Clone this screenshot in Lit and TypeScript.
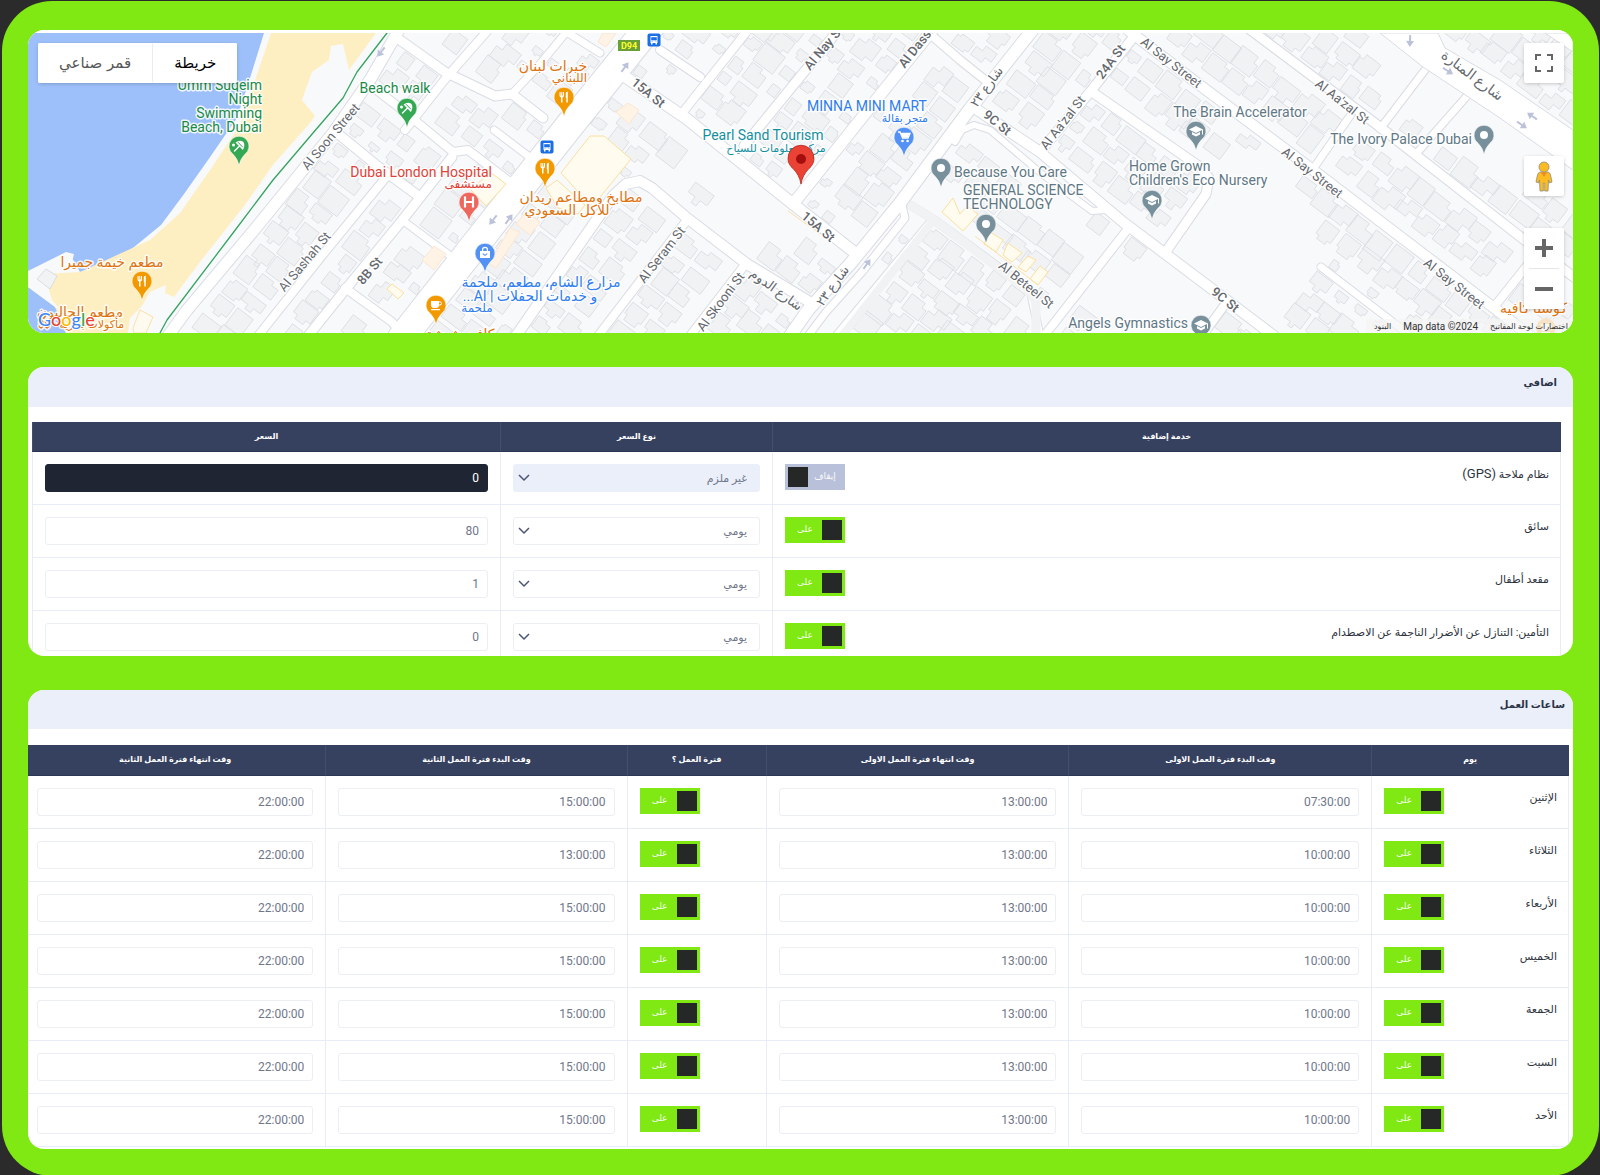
import { LitElement, html, svg, css } from "lit";
import { customElement, property } from "lit/decorators.js";
import { classMap } from "lit/directives/class-map.js";

type Pt = [number, number];
interface Road { w: number; pts: Pt[]; }
interface Label {
  t: string; x: number; y: number; c: string;
  a?: "start" | "middle" | "end"; r?: number; s?: string;
}
interface Pin { x: number; y: number; c: string; k: string; }

/* ---------- map data ---------- */

const ROADS: Road[] = [
  { w: 11, pts: [[400, 28], [370, 80], [333, 133], [255, 229], [187, 310], [168, 336]] },
  { w: 8, pts: [[387, 176], [320, 258], [258, 336]] },
  { w: 8, pts: [[488, 30], [446, 78], [405, 130]] },
  { w: 9, pts: [[452, 157], [400, 223], [345, 290], [308, 336]] },
  { w: 9, pts: [[400, 40], [445, 72], [495, 96], [512, 94], [543, 118]] },
  { w: 7, pts: [[512, 94], [540, 64], [568, 30]] },
  { w: 7, pts: [[560, 28], [600, 53]] },
  { w: 9, pts: [[337, 133], [380, 168], [420, 197]] },
  { w: 8, pts: [[374, 88], [400, 108], [453, 152], [468, 150], [523, 192]] },
  { w: 7, pts: [[494, 130], [540, 165]] },
  { w: 7, pts: [[402, 220], [452, 257]] },
  { w: 8, pts: [[345, 288], [392, 322], [402, 334]] },
  { w: 28, pts: [[650, 26], [570, 125], [475, 245], [402, 338]] },
  { w: 11, pts: [[624, 76], [687, 119], [793, 204], [854, 252]] },
  { w: 8, pts: [[660, 50], [700, 77]] },
  { w: 8, pts: [[683, 112], [748, 30]] },
  { w: 9, pts: [[840, 28], [760, 126], [744, 146]] },
  { w: 11, pts: [[934, 28], [868, 110], [793, 204]] },
  { w: 12, pts: [[1034, 28], [969, 110], [900, 203], [850, 264], [808, 310], [790, 336]] },
  { w: 7, pts: [[902, 205], [905, 218], [862, 272], [826, 312], [808, 336]] },
  { w: 8, pts: [[930, 34], [960, 60], [990, 84]] },
  { w: 10, pts: [[973, 107], [1040, 152], [1123, 222], [1200, 280], [1274, 336]] },
  { w: 6, pts: [[955, 142], [962, 130], [974, 125], [990, 130], [1042, 174], [1092, 211], [1106, 210]] },
  { w: 9, pts: [[1136, 34], [1090, 92], [1040, 152]] },
  { w: 10, pts: [[1128, 30], [1197, 83], [1313, 170], [1427, 257], [1502, 314], [1530, 336]] },
  { w: 9, pts: [[1248, 28], [1380, 127], [1527, 242], [1578, 280]] },
  { w: 9, pts: [[1092, 92], [1200, 167], [1209, 178], [1206, 194], [1165, 253]] },
  { w: 8, pts: [[1127, 230], [1044, 336]] },
  { w: 7, pts: [[1428, 66], [1380, 129]] },
  { w: 7, pts: [[1467, 96], [1416, 154]] },
  { w: 7, pts: [[1350, 116], [1313, 169]] },
  { w: 8, pts: [[1530, 262], [1494, 307]] },
  { w: 7, pts: [[1321, 267], [1398, 326], [1412, 338]] },
  { w: 8, pts: [[1226, 303], [1202, 336]] },
  { w: 10, pts: [[516, 336], [613, 196], [626, 184], [640, 181], [652, 188], [687, 218], [747, 264], [813, 304]] },
  { w: 8, pts: [[687, 220], [598, 336]] },
  { w: 8, pts: [[744, 266], [690, 336]] },
  { w: 7, pts: [[912, 206], [933, 219], [1030, 290], [1040, 336]] },
  { w: 7, pts: [[932, 220], [836, 336]] },
];

const GREY_LANES: Road[] = [
  { w: 9, pts: [[912, 206], [933, 219], [1028, 290], [1036, 302], [1036, 336]] },
  { w: 8, pts: [[932, 222], [842, 336]] },
];

/* ground without buildings: cx, cy, r */
const OPEN: [number, number, number][] = [
  [712, 160, 26], [745, 195, 34], [690, 140, 22], [780, 222, 26], [735, 225, 26], [586, 165, 36], [655, 175, 26], [640, 100, 14],
  [900, 100, 24], [1020, 165, 22], [1060, 205, 26], [1030, 200, 22], [1080, 228, 16],
  [1150, 300, 48], [1190, 250, 34], [1120, 320, 32], [1260, 180, 38], [1240, 230, 42], [1285, 225, 42], [1270, 270, 38],
  [1210, 270, 20], [960, 190, 16], [1350, 230, 10], [400, 70, 6], [1225, 130, 8], [850, 230, 10],
];

const segDist = (p: Pt, a: Pt, b: Pt): number => {
  const dx = b[0] - a[0], dy = b[1] - a[1];
  const t = Math.max(0, Math.min(1, ((p[0] - a[0]) * dx + (p[1] - a[1]) * dy) / (dx * dx + dy * dy)));
  return Math.hypot(p[0] - a[0] - t * dx, p[1] - a[1] - t * dy);
};

const clearance = (p: Pt): number => {
  let d = 99;
  for (const r of ROADS)
    for (let i = 1; i < r.pts.length; i++) d = Math.min(d, segDist(p, r.pts[i - 1], r.pts[i]) - r.w / 2);
  return d;
};

const rnd = (i: number, j: number, k: number): number => {
  const v = Math.sin(i * 127.1 + j * 311.7 + k * 74.7) * 43758.5453;
  return v - Math.floor(v);
};

/* Plots follow the street grid, which is turned 37 degrees */
const buildings = (): string => {
  const c = Math.cos(37 * Math.PI / 180), s = Math.sin(37 * Math.PI / 180);
  const out: string[] = [];
  for (let i = -50; i < 90; i++)
    for (let j = -70; j < 40; j++) {
      const u = i * 24 + rnd(i, j, 1) * 5, v = j * 22 + rnd(i, j, 2) * 5;
      const x = u * c - v * s, y = u * s + v * c;
      if (x < 150 || x > 1580 || y < 26 || y > 340) continue;
      if (x < 395 - (y - 33) * 0.74 + 14) continue;
      if (y < 60 + (x - 1400) * 0.66 + 44 && y > (x - 1440) * 0.66 + 34 && x > 1370) continue;
      if (OPEN.some(o => Math.hypot(x - o[0], y - o[1]) < o[2])) continue;
      const room = clearance([x, y]);
      if (room < 6) continue;
      const m = Math.min(12, room - 1);
      const hw = m * (0.74 + rnd(i, j, 3) * 0.32), hh = m * (0.62 + rnd(i, j, 4) * 0.35);
      const n = hw * (0.2 + rnd(i, j, 5) * 0.5), q = hh * (0.2 + rnd(i, j, 6) * 0.4);
      const kind = rnd(i, j, 7);
      const shape: Pt[] = kind < 0.2
        ? [[-hw, -hh], [hw, -hh], [hw, hh], [-hw, hh]]
        : kind < 0.5
          ? [[-hw, -hh], [n, -hh], [n, -q], [hw, -q], [hw, hh], [-hw, hh]]
          : kind < 0.75
            ? [[-hw, -hh], [hw, -hh], [hw, q], [n, q], [n, hh], [-n, hh], [-n, q], [-hw, q]]
            : [[-hw, -q], [-n, -q], [-n, -hh], [hw, -hh], [hw, q], [n, q], [n, hh], [-hw, hh]];
      out.push("M" + shape.map(([a, b]) => `${(x + a * c - b * s).toFixed(1)},${(y + a * s + b * c).toFixed(1)}`).join("L") + "Z");
    }
  return out.join("");
};

const BUILDINGS = buildings();
const line = (r: Road): string => "M" + r.pts.map(p => p.join(",")).join("L");

const GREEN = "#1a8a48", ORANGE = "#dd7410", BLUE = "#2f7df0", SLATE = "#5f7885", ROADC = "#64686e";

const LABELS: Label[] = [
  { t: "Umm Suqeim", x: 262, y: 90, c: GREEN, a: "end" },
  { t: "Night", x: 262, y: 104, c: GREEN, a: "end" },
  { t: "Swimming", x: 262, y: 118, c: GREEN, a: "end" },
  { t: "Beach, Dubai", x: 262, y: 132, c: GREEN, a: "end" },
  { t: "Beach walk", x: 395, y: 93, c: GREEN, a: "middle" },
  { t: "Al Soon Street", x: 331, y: 137, c: ROADC, r: -50, s: "road" },
  { t: "Al Sashah St", x: 305, y: 262, c: ROADC, r: -50, s: "road" },
  { t: "8B St", x: 370, y: 271, c: ROADC, r: -50, s: "roadb" },
  { t: "Dubai London Hospital", x: 492, y: 177, c: "#e04237", a: "end" },
  { t: "مستشفى", x: 492, y: 188, c: "#e04237", a: "end", s: "arsm" },
  { t: "خيرات لبنان", x: 553, y: 71, c: ORANGE, a: "middle", s: "ar" },
  { t: "اللبناني", x: 587, y: 82, c: ORANGE, a: "end", s: "arsm" },
  { t: "مطابخ ومطاعم ريدان", x: 581, y: 202, c: ORANGE, a: "middle", s: "ar" },
  { t: "للاكل السعودي", x: 567, y: 215, c: ORANGE, a: "middle", s: "ar" },
  { t: "مزارع الشام، مطعم، ملحمة", x: 541, y: 287, c: BLUE, a: "middle", s: "ar" },
  { t: "و خدمات الحفلات | Al...", x: 530, y: 301, c: BLUE, a: "middle", s: "ar rtl" },
  { t: "ملحمة", x: 477, y: 312, c: BLUE, a: "middle", s: "arsm" },
  { t: "كافيه شيشة", x: 460, y: 339, c: ORANGE, a: "middle", s: "ar" },
  { t: "15A St", x: 648, y: 93, c: ROADC, r: 39, s: "roadb" },
  { t: "Al Seram St", x: 662, y: 255, c: ROADC, r: -52, s: "road" },
  { t: "Al Skooni St", x: 721, y: 302, c: ROADC, r: -53, s: "road" },
  { t: "شارع الدوم", x: 776, y: 290, c: ROADC, r: 36, s: "roadar" },
  { t: "Pearl Sand Tourism", x: 763, y: 140, c: "#148f9e", a: "middle" },
  { t: "مركز معلومات للسياح", x: 776, y: 152, c: "#148f9e", a: "middle", s: "fine" },
  { t: "Al Nay St", x: 824, y: 48, c: ROADC, r: -50, s: "roadb" },
  { t: "Al Dassis St", x: 923, y: 39, c: ROADC, r: -52, s: "roadb" },
  { t: "MINNA MINI MART", x: 867, y: 111, c: BLUE, a: "middle" },
  { t: "متجر بقالة", x: 928, y: 122, c: BLUE, a: "end", s: "fine" },
  { t: "شارع ٢٣", x: 987, y: 87, c: ROADC, r: -54, s: "roadar" },
  { t: "شارع ٢٣", x: 833, y: 286, c: ROADC, r: -54, s: "roadar" },
  { t: "9C St", x: 997, y: 123, c: ROADC, r: 39, s: "roadb" },
  { t: "24A St", x: 1111, y: 62, c: ROADC, r: -53, s: "roadb" },
  { t: "Al Aa'zal St", x: 1063, y: 123, c: ROADC, r: -52, s: "road" },
  { t: "Al Say Street", x: 1171, y: 63, c: ROADC, r: 38, s: "road" },
  { t: "15A St", x: 818, y: 227, c: ROADC, r: 40, s: "roadb" },
  { t: "Because You Care", x: 954, y: 177, c: SLATE },
  { t: "GENERAL SCIENCE", x: 963, y: 195, c: SLATE },
  { t: "TECHNOLOGY", x: 963, y: 209, c: SLATE },
  { t: "Al Beteel St", x: 1026, y: 285, c: ROADC, r: 39, s: "road" },
  { t: "The Brain Accelerator", x: 1240, y: 117, c: SLATE, a: "middle" },
  { t: "Home Grown", x: 1129, y: 171, c: SLATE },
  { t: "Children's Eco Nursery", x: 1129, y: 185, c: SLATE },
  { t: "Angels Gymnastics", x: 1188, y: 328, c: SLATE, a: "end" },
  { t: "Al Aa'zal St", x: 1342, y: 102, c: ROADC, r: 38, s: "road" },
  { t: "Al Say Street", x: 1312, y: 173, c: ROADC, r: 38, s: "road" },
  { t: "Al Say Street", x: 1454, y: 284, c: ROADC, r: 38, s: "road" },
  { t: "9C St", x: 1225, y: 300, c: ROADC, r: 39, s: "roadb" },
  { t: "شارع المنارة", x: 1472, y: 76, c: ROADC, r: 37, s: "roadar big" },
  { t: "The Ivory Palace Dubai", x: 1472, y: 144, c: SLATE, a: "end" },
  { t: "كوستا كافيه", x: 1567, y: 313, c: ORANGE, a: "end", s: "ar" },
  { t: "مطعم خيمة جميرا", x: 112, y: 267, c: ORANGE, a: "middle", s: "ar" },
  { t: "مطعم الجاليون", x: 123, y: 317, c: ORANGE, a: "end", s: "ar" },
  { t: "مأكولات بحرية • $$", x: 81, y: 328, c: ORANGE, a: "middle", s: "fine rtl" },
];

const PINS: Pin[] = [
  { x: 239, y: 165, c: "#34a853", k: "beach" },
  { x: 407, y: 127, c: "#34a853", k: "beach" },
  { x: 142, y: 300, c: "#f29900", k: "food" },
  { x: 469, y: 221, c: "#ee675c", k: "h" },
  { x: 564, y: 116, c: "#f29900", k: "food" },
  { x: 545, y: 187, c: "#f29900", k: "food" },
  { x: 485, y: 272, c: "#5491f5", k: "bag" },
  { x: 436, y: 324, c: "#f29900", k: "cup" },
  { x: 904, y: 156, c: "#5491f5", k: "cart" },
  { x: 941, y: 187, c: "#78909c", k: "dot" },
  { x: 986, y: 243, c: "#78909c", k: "dot" },
  { x: 1196, y: 150, c: "#78909c", k: "cap" },
  { x: 1152, y: 219, c: "#78909c", k: "cap" },
  { x: 1484, y: 154, c: "#78909c", k: "dot" },
  { x: 1201, y: 344, c: "#78909c", k: "cap" },
  { x: 1546, y: 347, c: "#f7b95a", k: "cup" },
];

/* glyphs are centred on the head of the pin */
const GLYPH: Record<string, unknown> = {
  dot: svg`<circle r="4" fill="#fff"/>`,
  beach: svg`<path d="M-4.500,5L1,-.5" fill="none" stroke="#fff" stroke-width="1.500" stroke-linecap="round"/><path d="M-3.500,-3.500Q1,-6.500 4.500,-4Q6.500,-.5 3.800,4Z" fill="#fff"/><path d="M-1,-3.800L3.800,1.200" stroke="#34a853"/><circle cx="-5.500" cy="-1" r="1.500" fill="#fff"/>`,
  food: svg`<path d="M-4.500,-5v3.600q0,1.600 1.500,1.900V5.500h1.500V.5q1.500,-.3 1.500,-1.900V-5h-1v3.400h-.7V-5h-1v3.400h-.7V-5ZM1.800,-4Q2,-5.300 3.800,-5.300V5.500H2.300V1H1.800Z" fill="#fff"/>`,
  h: svg`<path d="M-4,-5.500V5.500M4,-5.500V5.500M-4,0H4" stroke="#fff" stroke-width="2.200" fill="none"/>`,
  bag: svg`<path d="M-5,-2H5V5H-5Z" fill="#fff"/><path d="M-2.400,-2V-3.400Q-2.400,-5.600 0,-5.600T2.400,-3.400V-2" stroke="#fff" stroke-width="1.200" fill="none"/><path d="M-2.200,.5Q0,3.600 2.200,.5" stroke="#5491f5" stroke-width="1.200" fill="none"/>`,
  cup: svg`<path d="M-5,-4H3V0Q3,3 0,3H-2Q-5,3 -5,0ZM-5,4H4V5.300H-5Z" fill="#fff"/><path d="M3,-3H4.300Q5.500,-3 5.500,-1.500T4,0H3" stroke="#fff" fill="none"/>`,
  cart: svg`<path d="M-6,-5h2l2.600,6H4l2,-4.500H-2.600" stroke="#fff" stroke-width="1.300" fill="none"/><path d="M-3,-3.500H5.500L3.700,.5H-1.400Z" fill="#fff"/><circle cx="-1.500" cy="4" r="1.300" fill="#fff"/><circle cx="3.600" cy="4" r="1.300" fill="#fff"/>`,
  cap: svg`<path d="M0,-5L7,-1.500L0,2L-7,-1.500Z" fill="#fff"/><path d="M-4,1L0,3L4,1V3.400L0,5.500L-4,3.400ZM6,-1.500H7V3.500H6Z" fill="#fff"/>`,
};

const ARROWS: [number, number, number][] = [
  [625, 67, -54], [509, 219, -54], [493, 220, 128], [381, 52, 128], [867, 264, -54],
  [1410, 41, 92], [1448, 71, 32], [1522, 125, 34], [1532, 116, 214],
];

@customElement("area-map")
class AreaMap extends LitElement {
  static styles = css`
    :host { display: block; position: relative; height: 303px; overflow: hidden; border-radius: 16px; background: #fff; }
    .canvas { display: block; width: 100%; height: 100%; }
    .lbl { font: 14px Roboto, "DejaVu Sans", sans-serif; paint-order: stroke; stroke: #fff; stroke-width: 3px; stroke-linejoin: round; stroke-opacity: .85; }
    .arsm { font-size: 12px; }
    .fine { font-size: 11px; }
    .road, .roadb, .roadar { font-size: 13px; }
    .roadb { font-weight: 500; }
    .big { font-size: 14px; }
    .rtl { direction: rtl; }
    .brand { font: 500 18px Lato, Roboto, sans-serif; paint-order: stroke; stroke: #fff; stroke-width: 2px; }
    .badge { font: 700 9px Roboto, sans-serif; }
    button { font: inherit; color: inherit; border: 0; background: #fff; padding: 0; cursor: pointer; display: grid; place-items: center; }
    .types { position: absolute; top: 13px; left: 10px; display: flex; height: 40px; background: #fff; border-radius: 2px; box-shadow: 0 1px 4px -1px rgba(0,0,0,.3); font: 15px "DejaVu Sans", sans-serif; color: #565656; }
    .types button { padding: 0 21px; border-radius: 2px; }
    .types .on { color: #000; border-left: 1px solid #ececec; }
    .tools { position: absolute; top: 13px; right: 9px; display: flex; flex-direction: column; }
    .tool { width: 40px; height: 40px; border-radius: 2px; box-shadow: 0 1px 4px -1px rgba(0,0,0,.3); }
    .man { margin: 73px 0 32px; }
    .zoom { display: flex; flex-direction: column; background: #fff; border-radius: 2px; box-shadow: 0 1px 4px -1px rgba(0,0,0,.3); }
    .zoom button { width: 40px; height: 40px; }
    .rule { height: 1px; margin: 0 5px; background: #e6e6e6; }
    .legal { position: absolute; right: 0; bottom: 0; display: flex; gap: 12px; padding: 0 5px 0 8px; height: 14px; align-items: center; background: rgba(245,245,245,.7); color: #333; font: 10px Roboto, "DejaVu Sans", sans-serif; white-space: nowrap; }
    .legal a { color: inherit; text-decoration: none; }
    .legal button { background: none; }
    .legal .sm { font-size: 8px; }
  `;

  render() {
    return html`
      <svg class="canvas" viewBox="28 30 1545 303" preserveAspectRatio="xMidYMid slice" role="img" aria-label="خريطة">
        <rect x="28" y="33" width="1545" height="300" fill="#f8f9fb"/>
        <path d="M28,33H264L250,78L237,118L208,160L184,194L161,225L128,252L112,262L80,272L72,258L28,271Z" fill="#9dc0fa"/>
        <path d="M28,287L62,312L66,333H28Z" fill="#9dc0fa"/>
        <path d="M271,33H376L349,70L343,44L331,46L329,60L312,72L302,100L315,116L310,123L273,165L245,205L200,262L174,297L165,293L166,285L150,292L142,306L130,318L128,333H66L52,300L44,274L80,272L150,240L180,213L210,170L240,125Z" fill="#feefc3"/>
        <path d="M28,271L66,252L74,254L72,262L56,272L40,280L52,300L62,312L28,287Z" fill="#f8f9fb"/>
        <path d="M37,279L46,269L57,276L50,289Z" fill="#f1f3f4" stroke="#dadde2"/>
        <path d="M133,328L140,310L153,317L146,333H134Z" fill="#fefaf0" stroke="#fbe2a5"/>
        <path d="${BUILDINGS}" fill="#f1f2f4" stroke="#dddfe4" stroke-width="1"/>
        <g fill="none" stroke-linejoin="round" stroke-linecap="round">
          ${ROADS.map(r => svg`<path d="${line(r)}" stroke="#d9dce3" stroke-width="${r.w + 2}"/>`)}
          ${ROADS.map(r => svg`<path d="${line(r)}" stroke="#fff" stroke-width="${r.w}"/>`)}
          ${GREY_LANES.map(r => svg`<path d="${line(r)}" stroke="#f1f2f4" stroke-width="${r.w}"/>`)}
          <path d="M387,33L357,72L343,98L313,133L273,180L233,233L167,320L160,333" stroke="#34a35f" stroke-width="1.300"/>
        </g>
        <path d="M1380,33L1404,52L1423,67L1500,118L1573,170V130L1500,80L1445,48L1438,33Z" fill="#fff" stroke="#d9dce3"/>
        <path d="M1545,33L1573,52V33Z" fill="#fff" stroke="#d9dce3"/>
        <g fill="#fffbee" stroke="#fbe0a0">
          <path d="M561,173L590,136H604L631,159L592,207Z"/>
          <path d="M471,190L490,172L506,184L486,206Z"/>
          <path d="M546,188L557,180L585,205L578,214L558,208Z"/>
          <path d="M387,289L392,284L404,293L398,299Z"/>
          <path d="M953,198L942,212L963,231L978,214L967,206L960,214Z"/>
          <path d="M990,232L1003,240L996,252L984,244ZM1008,243L1022,253L1012,262L1003,255ZM1028,256L1036,260L1026,272L1018,267ZM1040,266L1048,272L1038,285L1030,279Z"/>
          <path d="M975,236L1038,285M788,211L820,234" fill="none"/>
        </g>
        <g fill="#fff3e6" stroke="#fbe6d2">
          <path d="M616,112L628,103L639,110L629,124Z"/><path d="M603,33H616L606,47L598,42Z"/>
          <path d="M489,264L510,228L520,232L496,268Z"/><path d="M422,260L434,246L446,254L434,270Z"/><path d="M516,224L526,212L540,222L530,235Z"/>
        </g>
        ${ARROWS.map(([x, y, r]) => svg`<path transform="translate(${x} ${y}) rotate(${r})" d="M-6,-1H0V-4L6,0L0,4V1H-6Z" fill="#bcc2dc"/>`)}
        ${PINS.map(p => svg`<g transform="translate(${p.x} ${p.y - 19})"><path d="M0,19.500Q-1.200,13 -6,8.200A10,10 0 1 1 6,8.200Q1.200,13 0,19.500Z" fill="${p.c}" stroke="#fff" stroke-width=".6"/>${GLYPH[p.k]}</g>`)}
        ${LABELS.map(l => svg`<text class="lbl ${l.s ?? ""}" fill="${l.c}" transform="translate(${l.x} ${l.y})${l.r ? ` rotate(${l.r})` : ""}" y="${l.r ? 4 : 0}" text-anchor="${l.r ? "middle" : l.a ?? "start"}">${l.t}</text>`)}
        ${[[547, 147], [654, 40]].map(([x, y]) => svg`<g transform="translate(${x} ${y})"><rect x="-6.500" y="-6.500" width="13" height="13" rx="2" fill="#1a6fe6"/><path d="M-3.500,-4H3.500V3H-3.500ZM-3,3H-1.500V4.500H-3ZM1.500,3H3V4.500H1.500Z" fill="#fff"/><path d="M-2.500,-2.500H2.500V0H-2.500ZM-2.500,1.200H-1.300M1.300,1.200H2.500" fill="#1a6fe6" stroke="#1a6fe6" stroke-width=".6"/></g>`)}
        <rect x="618" y="40" width="22" height="11" fill="#689f38"/>
        <text class="badge" x="629" y="49" text-anchor="middle" fill="#ffff2e">D94</text>
        <path d="M801,184Q799.500,175 793,168.500A13,13 0 1 1 809,168.500Q802.500,175 801,184Z" fill="#ea4335" stroke="#b8261b" stroke-width=".8"/>
        <circle cx="801" cy="159" r="5" fill="#a50e0e"/>
        <text class="brand" x="38" y="326"><tspan fill="#4285f4">G</tspan><tspan fill="#ea4335">o</tspan><tspan fill="#fbbc04">o</tspan><tspan fill="#4285f4">g</tspan><tspan fill="#34a853">l</tspan><tspan fill="#ea4335">e</tspan></text>
        <rect x="28" y="30" width="1545" height="3" fill="#fff"/>
      </svg>
      <div class="types" dir="rtl">
        <button class="on" type="button">خريطة</button>
        <button type="button">قمر صناعي</button>
      </div>
      <div class="tools">
        <button class="tool" type="button" aria-label="ملء الشاشة">
          <svg width="18" height="18" viewBox="0 0 18 18" fill="none" stroke="#666" stroke-width="2"><path d="M1,6V1H6M12,1H17V6M17,12V17H12M6,17H1V12"/></svg>
        </button>
        <button class="tool man" type="button" aria-label="التجوّل الافتراضي">
          <svg width="18" height="31" viewBox="0 0 18 31"><g fill="#fbbc23" stroke="#8f8a78" stroke-width=".8"><path d="M5,11H13Q15,11.500 15.500,14L17,21L14.500,22L13.500,19L13,30H9.700V22H8.300V30H5L4.500,19L3.500,22L1,21L2.500,14Q3,11.500 5,11Z"/><circle cx="9" cy="6" r="5"/></g><path d="M6,11.400H12L9,16Z" fill="#f08a24"/></svg>
        </button>
        <div class="zoom">
          <button type="button" aria-label="تكبير"><svg width="18" height="18" viewBox="0 0 18 18"><path d="M0,9H18M9,0V18" stroke="#666" stroke-width="4"/></svg></button>
          <div class="rule"></div>
          <button type="button" aria-label="تصغير"><svg width="18" height="18" viewBox="0 0 18 18"><path d="M0,9H18" stroke="#666" stroke-width="4"/></svg></button>
        </div>
      </div>
      <div class="legal" dir="rtl">
        <button class="sm" type="button">اختصارات لوحة المفاتيح</button>
        <span dir="ltr">Map data ©2024</span>
        <a class="sm" href="#terms">البنود</a>
      </div>`;
  }
}

@customElement("power-switch")
class PowerSwitch extends LitElement {
  @property({ type: Boolean }) on = false;
  @property() name = "";

  static styles = css`
    :host { display: block; }
    .switch { box-sizing: border-box; display: flex; align-items: flex-start; width: 60px; height: 26px; padding: 3px; background: #b9c1da; color: #fff; font: 9px "DejaVu Sans", sans-serif; cursor: pointer; }
    .switch.on { background: #80e812; }
    .switch input { appearance: none; width: 20px; height: 20px; margin: 0; background: #252826; order: 2; }
    .switch.on input { order: 0; }
    .word { flex: 1; order: 1; text-align: center; line-height: 18px; opacity: .9; }
  `;

  render() {
    return html`<label class=${classMap({ switch: true, on: this.on })}>
      <input type="checkbox" .checked=${this.on} aria-label=${this.name}
        @change=${(e: Event) => { this.on = (e.target as HTMLInputElement).checked; }}>
      <span class="word">${this.on ? "على" : "إيقاف"}</span>
    </label>`;
  }
}

const EXTRAS = [
  { name: "نظام ملاحة", code: "(GPS)", on: false, kind: "غير ملزم", price: "0" },
  { name: "سائق", on: true, kind: "يومي", price: "80" },
  { name: "مقعد أطفال", on: true, kind: "يومي", price: "1" },
  { name: "التأمين: التنازل عن الأضرار الناجمة عن الاصطدام", on: true, kind: "يومي", price: "0" },
];

const HOURS_HEAD = ["يوم", "وقت البدء فترة العمل الاولى", "وقت انتهاء فترة العمل الاولى", "فترة العمل ؟", "وقت البدء فترة العمل الثانية", "وقت انتهاء فترة العمل الثانية"];

const DAYS = [
  { day: "الإثنين", t: ["07:30:00", "13:00:00", "15:00:00", "22:00:00"] },
  { day: "الثلاثاء", t: ["10:00:00", "13:00:00", "13:00:00", "22:00:00"] },
  { day: "الأربعاء", t: ["10:00:00", "13:00:00", "15:00:00", "22:00:00"] },
  { day: "الخميس", t: ["10:00:00", "13:00:00", "15:00:00", "22:00:00"] },
  { day: "الجمعة", t: ["10:00:00", "13:00:00", "15:00:00", "22:00:00"] },
  { day: "السبت", t: ["10:00:00", "13:00:00", "15:00:00", "22:00:00"] },
  { day: "الأحد", t: ["10:00:00", "13:00:00", "15:00:00", "22:00:00"] },
];

@customElement("app-root")
class AppRoot extends LitElement {
  static styles = css`
    :host { display: block; min-height: 100vh; box-sizing: border-box; padding: 1px 1px 0 2px; background: #2b2b2b; font-family: Roboto, "DejaVu Sans", sans-serif; color: #2e3440; }
    .page { display: flex; flex-direction: column; gap: 34px; padding: 29px 26px 27px; border-radius: 50px; background: #80e812; }
    .card { overflow: hidden; border-radius: 16px; background: #fff; }
    .title { box-sizing: border-box; margin: 0 0 15px; height: 40px; padding: 6px 16px 0; background: #eaeffa; font-size: 10px; line-height: 20px; font-weight: 700; color: #2b3347; }
    .hours .title { height: 39px; margin-bottom: 16px; padding: 5px 8px 0; }
    .extras .wrap { padding: 0 12px 0 4px; }
    .hours .wrap { padding: 0 4px 2px 0; }
    .hours table { width: calc(100% + 4px); }
    table { width: 100%; table-layout: fixed; border-collapse: separate; border-spacing: 0; font-size: 11px; }
    th { box-sizing: border-box; height: 30px; padding: 0; background: #36415f; color: #fff; font-size: 8px; line-height: 16px; font-weight: 700; border-left: 1px solid #434e6d; border-bottom: 1px solid #2b3654; }
    .hours th { height: 31px; }
    td { padding: 12px; border-left: 1px solid #e8ecf7; border-bottom: 1px solid #e8ecf7; vertical-align: top; }
    td:first-child, th:first-child { border-right: 1px solid #e8ecf7; }
    td:first-child { padding-right: 11px; }
    th:first-child { border-right-color: #36415f; }
    .extras tr:last-child td { padding-bottom: 5px; border-bottom: 0; }
    .named { display: flex; align-items: flex-start; justify-content: space-between; line-height: 20px; }
    .code { font-size: 13px; }
    .end { display: flex; justify-content: flex-end; }
    input, select { box-sizing: border-box; display: block; width: 100%; height: 28px; margin: 0; border: 1px solid #eceef5; border-radius: 3px; background: #fff; color: #70778a; font: 12px Roboto, "DejaVu Sans", sans-serif; outline: 0; }
    input { padding: 0 8px; text-align: right; direction: ltr; }
    .dark { background: #1f2532; border-color: #1f2532; color: #fff; }
    .pick { position: relative; }
    select { appearance: none; padding: 0 12px; font-size: 11px; }
    .mute { background: #eaeffa; border-color: #eaeffa; }
    .chev { position: absolute; left: 5px; top: 10px; pointer-events: none; }
    .c1 { width: 51.600%; } .c2 { width: 17.800%; }
    .h1 { width: 12.800%; } .h2 { width: 19.600%; } .h4 { width: 9%; } .h5 { width: 19.500%; }
  `;

  private extras() {
    return html`<section class="card extras" dir="rtl">
      <h2 class="title">اضافي</h2>
      <div class="wrap"><table>
        <colgroup><col class="c1"><col class="c2"><col></colgroup>
        <thead><tr><th>خدمة إضافية</th><th>نوع السعر</th><th>السعر</th></tr></thead>
        <tbody>${EXTRAS.map(e => html`<tr>
          <td><div class="named"><span>${e.name}${e.code ? html` <bdi class="code">${e.code}</bdi>` : ""}</span><power-switch .on=${e.on} .name=${e.name}></power-switch></div></td>
          <td><div class="pick">
            <select class=${e.on ? "" : "mute"} aria-label=${"نوع السعر " + e.name}><option>${e.kind}</option></select>
            <svg class="chev" width="12" height="8" viewBox="0 0 12 8" fill="none" stroke="#4b5578" stroke-width="1.500"><path d="M1,1L6,6L11,1"/></svg>
          </div></td>
          <td><input class=${e.on ? "" : "dark"} type="text" .value=${e.price} aria-label=${"السعر " + e.name}></td>
        </tr>`)}</tbody>
      </table></div>
    </section>`;
  }

  private hours() {
    const time = (v: string, n: number, day: string) => html`<td><input type="text" .value=${v} aria-label=${HOURS_HEAD[n] + " " + day}></td>`;
    return html`<section class="card hours" dir="rtl">
      <h2 class="title">ساعات العمل</h2>
      <div class="wrap"><table>
        <colgroup><col class="h1"><col class="h2"><col class="h2"><col class="h4"><col class="h5"><col class="h5"></colgroup>
        <thead><tr>${HOURS_HEAD.map(h => html`<th>${h}</th>`)}</tr></thead>
        <tbody>${DAYS.map(d => html`<tr>
          <td><div class="named"><span>${d.day}</span><power-switch .on=${true} .name=${d.day}></power-switch></div></td>
          ${time(d.t[0], 1, d.day)}${time(d.t[1], 2, d.day)}
          <td><div class="end"><power-switch .on=${true} .name=${"فترة العمل " + d.day}></power-switch></div></td>
          ${time(d.t[2], 4, d.day)}${time(d.t[3], 5, d.day)}
        </tr>`)}</tbody>
      </table></div>
    </section>`;
  }

  render() {
    return html`<main class="page"><area-map></area-map>${this.extras()}${this.hours()}</main>`;
  }
}
